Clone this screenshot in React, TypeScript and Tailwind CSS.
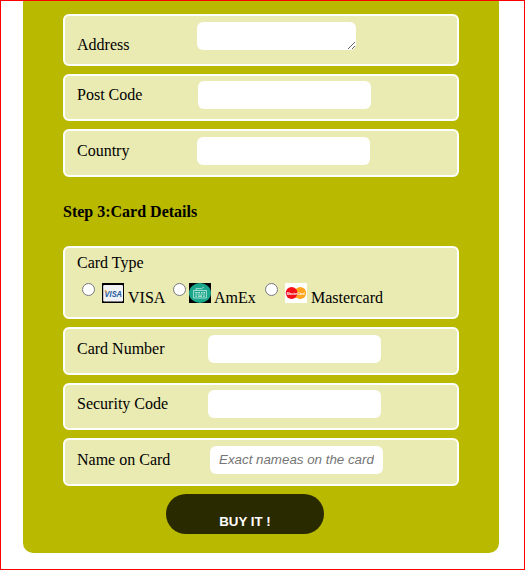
import type { ReactNode } from "react";

const fieldBase =
  "block h-7 shrink-0 rounded-[6px] border-0 bg-white px-[9px] font-['Liberation_Sans',Arial,sans-serif] text-[13.333px] outline-none";

function Row({ className, children }: { className: string; children: ReactNode }) {
  return (
    <div
      className={`flex items-start rounded-[6px] border-2 border-white bg-[#eaeab3] pl-3 leading-[18px] ${className}`}
    >
      {children}
    </div>
  );
}

function Radio({ label }: { label: string }) {
  return (
    <input
      type="radio"
      name="card-type"
      aria-label={label}
      className="mt-[0.5px] block h-[13px] w-[13px] shrink-0"
    />
  );
}

function VisaIcon() {
  return (
    <svg viewBox="0 0 22 20" className="mt-px h-5 w-[22px] shrink-0 overflow-visible">
      <rect width="22" height="20" fill="#000" />
      <rect x="1.2" y="2" width="19.8" height="16.4" rx="1.2" fill="#f0f2f6" />
      <text
        x="2.6"
        y="13.6"
        fontFamily="Liberation Sans"
        fontWeight="bold"
        fontStyle="italic"
        fontSize="9.2"
        textLength="17.4"
        lengthAdjust="spacingAndGlyphs"
        fill="#15599b"
      >
        VISA
      </text>
      <path d="M2.2 7 L4.4 7.2 L5.6 10.8 Z" fill="#e9a12c" />
    </svg>
  );
}

function AmexIcon() {
  return (
    <svg viewBox="0 0 22 20" className="mt-px h-5 w-[22px] shrink-0">
      <rect width="22" height="20" fill="#000" />
      <ellipse cx="11" cy="10" rx="11" ry="10" fill="#1ba78b" />
      <g fill="none" stroke="#c4eee2" strokeWidth="0.8">
        <path d="M4.6 7.5 H17.4 V15 H4.6 Z" />
        <path d="M7 7.3 V5.7 H12.4 L14.8 4.2" />
        <path d="M6.4 9.6 H8.4 M9.3 9.6 H11 M12 9.6 H13.5 M14.5 9.6 H16" strokeWidth="1.4" />
        <path d="M6.2 11.2 H16" strokeWidth="0.6" />
        <path d="M6.5 13.1 H8 M9 13.1 H13 M14 13.1 H15.7" strokeWidth="1.4" />
      </g>
    </svg>
  );
}

function MastercardIcon() {
  return (
    <svg viewBox="0 0 22 20" className="mt-px h-5 w-[22px] shrink-0 overflow-visible">
      <rect width="22" height="20" fill="#fff" />
      <ellipse cx="15.3" cy="10.1" rx="5.9" ry="6" fill="#ffa51f" />
      <ellipse cx="6.6" cy="10.1" rx="5.9" ry="6" fill="#f50f18" />
      <text
        x="1.8"
        y="11.8"
        fontFamily="Liberation Sans"
        fontWeight="bold"
        fontStyle="italic"
        fontSize="4.2"
        textLength="18"
        lengthAdjust="spacingAndGlyphs"
        fill="#fff"
      >
        MasterCard
      </text>
    </svg>
  );
}

export default function App() {
  return (
    <div className="h-[570px] w-[525px] overflow-hidden border border-[#ff0000] bg-white pl-[22px] font-['Liberation_Serif','Times_New_Roman',serif] text-[16px] leading-[18px] text-black">
      <form
        className="flex h-[552px] w-[476px] flex-col rounded-b-[10px] bg-[#b9b900] px-10 pt-[13px]"
        onSubmit={(e) => e.preventDefault()}
      >
        <div className="flex flex-col gap-2">
          <Row className="h-[52px]">
            <label htmlFor="address" className="w-[120px] pt-5">Address</label>
            <textarea id="address" className={`${fieldBase} mt-1.5 w-[159px] resize`} />
          </Row>
          <Row className="h-[47px]">
            <label htmlFor="post" className="w-[121px] pt-2.5">Post Code</label>
            <input id="post" className={`${fieldBase} mt-[5px] w-[173px]`} />
          </Row>
          <Row className="h-12">
            <label htmlFor="country" className="w-[120px] pt-[11px]">Country</label>
            <input id="country" className={`${fieldBase} mt-1.5 w-[173px]`} />
          </Row>
        </div>

        <h2 className="mt-[26px] mb-[25px] text-[16px] leading-[18px] font-bold">Step 3:Card Details</h2>

        <div className="flex flex-col gap-2">
          <Row className="h-[73px] flex-col">
            <div className="pt-1.5">Card Type</div>
            <div className="flex items-start pt-2.5 pl-[5px]">
              <Radio label="VISA" />
              <div className="ml-[7px] flex">
                <VisaIcon />
                <span className="ml-1 w-[45px] pt-[7px]">VISA</span>
              </div>
              <Radio label="AmEx" />
              <div className="ml-[3px] flex">
                <AmexIcon />
                <span className="ml-[3px] w-[51px] pt-[7px]">AmEx</span>
              </div>
              <Radio label="Mastercard" />
              <div className="ml-[7px] flex">
                <MastercardIcon />
                <span className="ml-1 pt-[7px]">Mastercard</span>
              </div>
            </div>
          </Row>
          <Row className="h-12">
            <label htmlFor="number" className="w-[131px] pt-[11px]">Card Number</label>
            <input id="number" className={`${fieldBase} mt-1.5 w-[173px]`} />
          </Row>
          <Row className="h-[47px]">
            <label htmlFor="security" className="w-[131px] pt-2.5">Security Code</label>
            <input id="security" className={`${fieldBase} mt-[5px] w-[173px]`} />
          </Row>
          <Row className="h-12">
            <label htmlFor="name" className="w-[133px] pt-[11px]">Name on Card</label>
            <input
              id="name"
              placeholder="Exact nameas on the card"
              className={`${fieldBase} mt-1.5 w-[173px] pb-0.5 italic placeholder:text-[#757575]`}
            />
          </Row>
        </div>

        <button
          type="submit"
          className="mt-2 ml-[103px] h-10 w-[158px] rounded-[20px] bg-[#2a2a00] pt-[14px] font-['Liberation_Sans',Arial,sans-serif] text-[13.333px] leading-[15px] font-bold text-white"
        >
          BUY IT !
        </button>
      </form>
    </div>
  );
}
